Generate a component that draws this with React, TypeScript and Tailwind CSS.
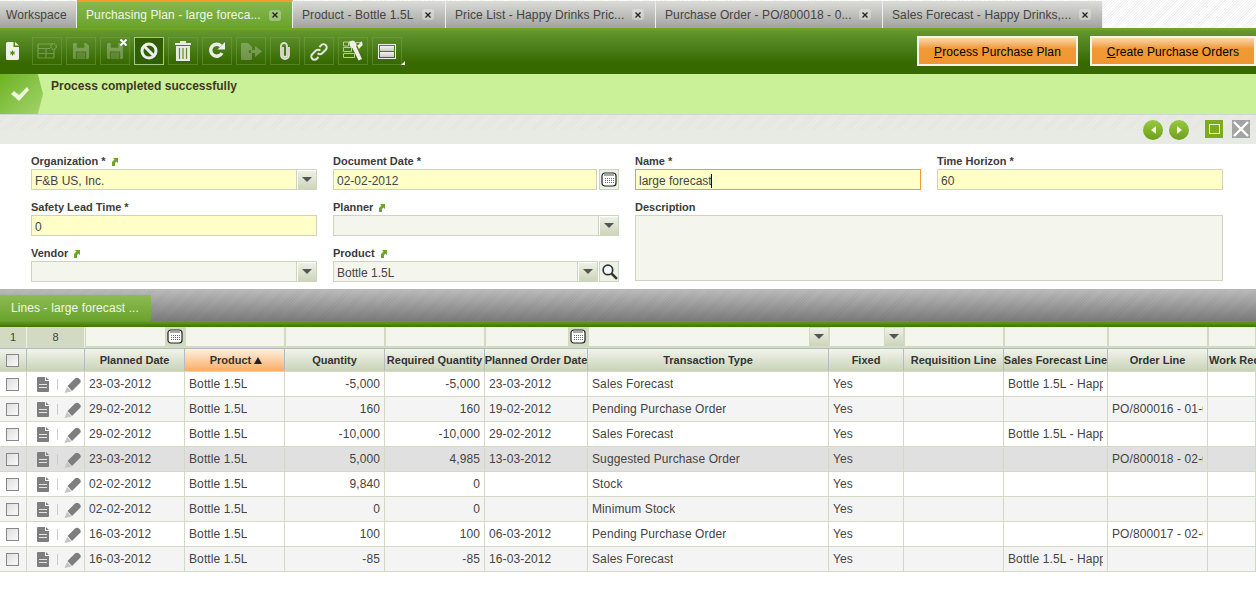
import React from "react";

const FONT = "font-['Liberation_Sans',Arial,sans-serif]";
const GRID = "grid grid-cols-[27px_58px_100px_100px_100px_100px_103px_241px_75px_100px_104px_100px_48px]";

const tabs = [
  { label: "Workspace", width: "w-[77px]" },
  { label: "Purchasing Plan - large foreca...", width: "w-[216px]", active: true, close: true },
  { label: "Product - Bottle 1.5L", width: "w-[153px]", close: true },
  { label: "Price List - Happy Drinks Pric...", width: "w-[210px]", close: true },
  { label: "Purchase Order - PO/800018 - 0...", width: "w-[227px]", close: true },
  { label: "Sales Forecast - Happy Drinks,...", width: "w-[220px]", close: true },
];

const HAPPY = "Bottle 1.5L - Happy Drinks";

const rows = [
  ["23-03-2012", "-5,000", "-5,000", "23-03-2012", "Sales Forecast", HAPPY, ""],
  ["29-02-2012", "160", "160", "19-02-2012", "Pending Purchase Order", "", "PO/800016 - 01-02-2012"],
  ["29-02-2012", "-10,000", "-10,000", "29-02-2012", "Sales Forecast", HAPPY, ""],
  ["23-03-2012", "5,000", "4,985", "13-03-2012", "Suggested Purchase Order", "", "PO/800018 - 02-02-2012"],
  ["02-02-2012", "9,840", "0", "", "Stock", "", ""],
  ["02-02-2012", "0", "0", "", "Minimum Stock", "", ""],
  ["16-03-2012", "100", "100", "06-03-2012", "Pending Purchase Order", "", "PO/800017 - 02-02-2012"],
  ["16-03-2012", "-85", "-85", "16-03-2012", "Sales Forecast", HAPPY, ""],
];

const Arrow = () => (
  <svg width="7" height="8" viewBox="0 0 7 8" className="ml-[5px] inline-block">
    <path d="M2 0h5v5L5.500 3.500 4 5v3H1V4l2.500-2.500z" fill="#6aa52a" />
  </svg>
);

const Caret = () => (
  <span className="flex h-[18px] w-[18px] items-center justify-center bg-gradient-to-b from-[#eef0e6] to-[#ccd5ba]">
    <svg width="10" height="5" viewBox="0 0 10 5"><path d="M0 0h10L5 5z" fill="#555" /></svg>
  </span>
);

const CalendarIcon = () => (
  <svg width="16" height="15" viewBox="0 0 16 15">
    <rect x="1" y="1" width="14" height="13" rx="3" fill="#fff" stroke="#222" strokeWidth="1.200" />
    <path d="M3 3h10" stroke="#555" strokeWidth="1" />
    <path d="M4 6.500h.8M6 6.500h.8M8 6.500h.8M10 6.500h.8M12 6.500h.8M4 8.500h.8M6 8.500h.8M8 8.500h.8M10 8.500h.8M12 8.500h.8M4 10.500h.8M6 10.500h.8M8 10.500h.8M10 10.500h.8M12 10.500h.8" stroke="#444" strokeWidth="1" />
  </svg>
);

const CloseTab = () => (
  <span className="flex h-[11px] w-[12px] items-center justify-center rounded-[3px] bg-white/30 text-black">
    <svg width="6" height="6" viewBox="0 0 6 6"><path d="M.5.5l5 5M5.500.5l-5 5" stroke="#222" strokeWidth="1.300" /></svg>
  </span>
);

const Floppy = ({ x }: { x?: boolean }) => (
  <span className="relative flex">
    <svg width="16" height="16" viewBox="0 0 17 17" className="opacity-30">
      <path d="M1.500 0H14l3 3v12.500Q17 17 15.500 17h-14Q0 17 0 15.500v-14Q0 0 1.500 0zM4 0v5h8V0zM3 9v8h11V9z" fill="#e9e9e4" fillRule="evenodd" />
      <path d="M4 10h9v7H4z" fill="#e9e9e4" opacity=".6" />
    </svg>
    {x && (
      <svg width="7" height="7" viewBox="0 0 7 7" className="absolute -right-[4px] -top-[4px]">
        <path d="M.5.5l6 6M6.500.5l-6 6" stroke="#fff" strokeWidth="2" />
      </svg>
    )}
  </span>
);

const ToolButton = ({ children, active }: { children: React.ReactNode; active?: boolean }) => (
  <div className={`flex h-[28px] w-[30px] items-center justify-center border ${active ? "border-[#a9c68a] bg-[#2f5f00]" : "border-[#7aa552]/45"}`}>
    {children}
  </div>
);

const Toolbar = () => (
  <div className="flex h-[46px] items-center justify-between border-t-2 border-[#71a51f] bg-gradient-to-b from-[#65982f] to-[#376900] to-75% pb-[2px]">
    <div className="flex items-center">
      <div className="ml-[6px] mr-[13px] flex w-[13px] justify-center">
        <svg width="13" height="18" viewBox="0 0 13 18">
          <path d="M0 1.500Q0 0 1.500 0H7.500v5H13v11.500Q13 18 11.500 18h-10Q0 18 0 16.500z" fill="#f1f1ec" />
          <path d="M9 0l4 3.500H9z" fill="#f1f1ec" />
          <path d="M6.500 8.500v5M4.300 9.800l4.400 2.400M8.700 9.800l-4.400 2.400" stroke="#4d8a12" strokeWidth="1.100" />
        </svg>
      </div>
      <div className="flex gap-[4px]">
        <ToolButton>
          <svg width="20" height="16" viewBox="0 0 20 16" className="opacity-30">
            <path d="M1 1h14M1 1v13a1 1 0 0 0 1 1h14a1 1 0 0 0 1-1V7M1 5.500h12M1 10.500h16M9 5.500v9.500" fill="none" stroke="#e9e9e4" strokeWidth="1.200" />
            <circle cx="16.500" cy="3.500" r="2.800" fill="none" stroke="#e9e9e4" strokeWidth="1.400" strokeDasharray="1.500 .7" />
          </svg>
        </ToolButton>
        <ToolButton><Floppy /></ToolButton>
        <ToolButton><Floppy x /></ToolButton>
        <ToolButton active>
          <svg width="20" height="20" viewBox="0 0 20 20">
            <circle cx="10" cy="10" r="7" fill="none" stroke="#eee" strokeWidth="3" />
            <path d="M5 5l10 10" stroke="#eee" strokeWidth="3" />
          </svg>
        </ToolButton>
        <ToolButton>
          <svg width="18" height="20" viewBox="0 0 18 20">
            <path d="M6 0h6v2h5v2H1V2h5zM2 5h14v15H2z" fill="#e9e9e4" />
            <path d="M5.500 7v11M9 7v11M12.500 7v11" stroke="#5d8c2d" strokeWidth="1.200" />
          </svg>
        </ToolButton>
        <ToolButton>
          <svg width="20" height="20" viewBox="0 0 20 20">
            <path d="M15 12a6 6 0 1 1-1-7" fill="none" stroke="#ececec" strokeWidth="3.400" />
            <path d="M10.500 8.500H18V1z" fill="#ececec" />
          </svg>
        </ToolButton>
        <ToolButton>
          <svg width="21" height="17" viewBox="0 0 21 17" className="opacity-30">
            <path d="M1 0h6l4 4v3H8v3h3v6a1 1 0 0 1-1 1H1a1 1 0 0 1-1-1V1a1 1 0 0 1 1-1zM10 7h4V3l7 5.500-7 5.500v-4h-4z" fill="#e9e9e4" />
          </svg>
        </ToolButton>
        <ToolButton>
          <svg width="12" height="18" viewBox="0 0 12 18">
            <path d="M4 5v8a2 2 0 0 0 4 0V4a3 3 0 0 0-6 0v9a4 4 0 0 0 8 0V5" fill="none" stroke="#dfdfd8" strokeWidth="1.800" />
          </svg>
        </ToolButton>
        <ToolButton>
          <svg width="20" height="19" viewBox="0 0 22 21">
            <path d="M9.500 12.500a3.500 3.500 0 0 0 5 0l4-4a3.500 3.500 0 0 0-5-5l-2 2" fill="none" stroke="#e6e6e0" strokeWidth="2.200" />
            <path d="M12.500 9.500a3.500 3.500 0 0 0-5 0l-4 4a3.500 3.500 0 0 0 5 5l2-2" fill="none" stroke="#e6e6e0" strokeWidth="2.200" />
          </svg>
        </ToolButton>
        <ToolButton>
          <svg width="22" height="22" viewBox="0 0 22 22">
            <path d="M1.500 7.500h8v4h-8zM1.500 13.500h11v4h-11zM1.500 2h5v4h-5zM14 2.500h6v3h-6z" fill="none" stroke="#b9cc9c" strokeWidth="1" />
            <path d="M7 1.500L11 .5q3.500 1 3 5.500l6 13-3.500 1.500-6-12.500Q7.500 8 7 1.500z" fill="#efefe8" />
            <path d="M19.500 1l-4 5 1.500 3 3.500-4z" fill="#efefe8" />
          </svg>
        </ToolButton>
        <ToolButton>
          <span className="relative flex">
            <span className="flex h-[15px] w-[18px] flex-col gap-[1px] border border-[#eee] p-[1px]">
              <span className="h-[5px] bg-gradient-to-b from-[#f4f4f0] to-[#c8c8c0]" />
              <span className="h-[5px] bg-gradient-to-b from-[#f4f4f0] to-[#c8c8c0]" />
            </span>
            <span className="absolute -bottom-[6px] -right-[9px] h-0 w-0 border-b-[4px] border-l-[4px] border-b-white border-l-transparent" />
          </span>
        </ToolButton>
      </div>
    </div>
    <div className="flex gap-[12px] text-[12px] tracking-[0.1px] text-black">
      <ActionButton first="P" rest="rocess Purchase Plan" width="w-[161px]" />
      <ActionButton first="C" rest="reate Purchase Orders" width="w-[166px]" />
    </div>
  </div>
);

const ActionButton = ({ first, rest, width }: { first: string; rest: string; width: string }) => (
  <button className={`h-[30px] ${width} border-2 border-[#f4f4ee] bg-gradient-to-b from-[#fbd9a8] via-[#f09a35] via-40% to-[#ef9632] pt-px text-center`}>
    <span className="underline">{first}</span>
    {rest}
  </button>
);

const Label = ({ text, arrow }: { text: string; arrow?: boolean }) => (
  <div className="h-[14px] text-[11px] font-bold leading-[13px] text-[#3b3b3b]">
    {text}
    {arrow && <Arrow />}
  </div>
);

const Field = ({
  label,
  value,
  arrow,
  required,
  caret,
  calendar,
  search,
  focus,
}: {
  label: string;
  value?: string;
  arrow?: boolean;
  required?: boolean;
  caret?: boolean;
  calendar?: boolean;
  search?: boolean;
  focus?: boolean;
}) => (
  <div className="flex flex-col">
    <Label text={label} arrow={arrow} />
    <div className="flex h-[21px] items-stretch">
      <div
        className={`flex min-w-0 flex-1 items-center border px-[3px] pt-[2px] text-[12px] text-[#444] ${
          focus ? "border-[#f39a34]" : "border-[#cdd6bc]"
        } ${required ? "bg-[#ffffc8]" : "bg-[#f4f6ee]"}`}
      >
        {value}
        {focus && <span className="ml-[-1px] h-[14px] w-px bg-[#111]" />}
      </div>
      {caret && (
        <div className="flex w-[20px] items-center justify-center border border-l-0 border-[#cdd6bc]">
          <Caret />
        </div>
      )}
      {calendar && (
        <div className="ml-[2px] flex w-[20px] items-center justify-center border border-[#cdd6bc] bg-[#eef1e6]">
          <CalendarIcon />
        </div>
      )}
      {search && (
        <div className="ml-[1px] flex w-[20px] items-center justify-center border border-[#cdd6bc] bg-[#eef1e6]">
          <svg width="17" height="17" viewBox="0 0 16 16">
            <circle cx="6.500" cy="6.500" r="4.500" fill="#f4f8ff" stroke="#333" strokeWidth="1.600" />
            <path d="M10 10l5 5" stroke="#333" strokeWidth="2.400" />
          </svg>
        </div>
      )}
    </div>
  </div>
);

const Form = () => (
  <div className="grid h-[145px] grid-cols-[286px_286px_286px_286px] grid-rows-[46px_46px_46px] gap-x-[16px] bg-white pl-[31px] pt-[11px]">
    <Field label="Organization *" arrow value="F&B US, Inc." required caret />
    <Field label="Document Date *" value="02-02-2012" required calendar />
    <Field label="Name *" value="large forecast" required focus />
    <Field label="Time Horizon *" value="60" required />
    <Field label="Safety Lead Time *" value="0" required />
    <Field label="Planner" arrow caret />
    <div className="col-span-2 row-span-2 flex flex-col">
      <Label text="Description" />
      <div className="h-[66px] w-[588px] border border-[#cdd6bc] bg-[#f4f6ee]" />
    </div>
    <Field label="Vendor" arrow caret />
    <Field label="Product" arrow value="Bottle 1.5L" caret search />
  </div>
);

const Check = () => (
  <span className="block h-[13px] w-[13px] border border-[#888] bg-gradient-to-br from-[#dedede] to-[#fbfbfb]" />
);

const Head = ({ children, sorted, check }: { children?: React.ReactNode; sorted?: boolean; check?: boolean }) => (
  <div
    className={`flex items-center justify-center overflow-hidden whitespace-nowrap border-r border-[#b4bcc0] text-[11px] font-bold text-[#333] ${
      sorted ? "bg-gradient-to-b from-[#fdf0df] to-[#f9ad66] pl-[3px]" : ""
    } ${check ? "pr-px" : ""}`}
  >
    {children}
  </div>
);

const Cell = ({ children, right }: { children?: React.ReactNode; right?: boolean }) => (
  <div
    className={`flex min-w-0 items-center border-r border-[#d3dac3] pl-[4px] pr-[4px] text-[12px] tracking-[0.1px] text-[#444] ${
      right ? "justify-end" : ""
    }`}
  >
    <span className="block overflow-hidden whitespace-nowrap">{children}</span>
  </div>
);

const Filter = ({ icon }: { icon?: React.ReactNode }) => (
  <div className="flex items-stretch border-x border-b-2 border-[#d3dac3]">
    <div className="flex-1 bg-[#f4f6ee]" />
    {icon && <div className="flex w-[19px] items-center justify-center">{icon}</div>}
  </div>
);

const RowIcons = () => (
  <div className="flex items-center gap-[7px] border-r border-[#d3dac3] pl-[9px]">
    <svg width="14" height="15" viewBox="0 0 14 15">
      <path d="M2 0h7v4h4v10a1 1 0 0 1-1 1H2a1 1 0 0 1-1-1V1a1 1 0 0 1 1-1zM10 0l3 3h-3z" fill="#7e7e7e" />
      <path d="M3 7.500h8M3 10.500h8" stroke="#e4e4e4" strokeWidth="1" />
    </svg>
    <span className="h-[11px] w-px bg-[#ccc]" />
    <svg width="17" height="17" viewBox="0 0 17 17" className="-ml-px">
      <path d="M3.500 10L11 2.500q2-1.500 4 0l1 1q1.500 2 0 3.500l-8 8z" fill="#7e7e7e" />
      <path d="M3 11l4.500 4.500L.5 17z" fill="#c4c4c4" />
    </svg>
  </div>
);

const Lines = () => (
  <div className="h-[250px] overflow-hidden">
    <div className={`${GRID} h-[22px] border-b border-[#b4bcc0] bg-[#d3dac3]`}>
      <div className="flex items-center justify-center border-r border-[#eef0e6] text-[11px] text-[#444]">1</div>
      <div className="flex items-center justify-center border-r border-[#eef0e6] text-[11px] text-[#444]">8</div>
      <Filter icon={<CalendarIcon />} />
      <Filter />
      <Filter />
      <Filter />
      <Filter icon={<CalendarIcon />} />
      <Filter icon={<Caret />} />
      <Filter icon={<Caret />} />
      <Filter />
      <Filter />
      <Filter />
      <Filter />
    </div>
    <div className={`${GRID} h-[23px] border-b border-[#d3dac3] bg-gradient-to-b from-[#f2f4ec] to-[#c9d3b8]`}>
      <Head check><Check /></Head>
      <Head />
      <Head>Planned Date</Head>
      <Head sorted>
        Product
        <svg width="8" height="7" viewBox="0 0 8 7" className="ml-[3px]"><path d="M4 0l4 7H0z" fill="#222" /></svg>
      </Head>
      <Head>Quantity</Head>
      <Head>Required Quantity</Head>
      <Head>Planned Order Date</Head>
      <Head>Transaction Type</Head>
      <Head>Fixed</Head>
      <Head>Requisition Line</Head>
      <Head>Sales Forecast Line</Head>
      <Head>Order Line</Head>
      <div className="flex items-center overflow-hidden whitespace-nowrap pl-[1px] text-[11px] font-bold text-[#333]">Work Requ</div>
    </div>
    {rows.map((r, i) => (
      <div
        key={i}
        className={`${GRID} h-[25px] border-b border-[#d3dac3] ${
          i === 3 ? "bg-[#e0e0e0]" : i % 2 === 1 ? "bg-[#f4f4f4]" : "bg-white"
        }`}
      >
        <div className="flex items-center justify-center border-r border-[#d3dac3] pr-px"><Check /></div>
        <RowIcons />
        <Cell>{r[0]}</Cell>
        <Cell>Bottle 1.5L</Cell>
        <Cell right>{r[1]}</Cell>
        <Cell right>{r[2]}</Cell>
        <Cell>{r[3]}</Cell>
        <Cell>{r[4]}</Cell>
        <Cell>Yes</Cell>
        <Cell />
        <Cell>{r[5]}</Cell>
        <Cell>{r[6]}</Cell>
        <Cell />
      </div>
    ))}
  </div>
);

const HATCH = "bg-[repeating-linear-gradient(135deg,#e5e6e0_0,#e5e6e0_1px,#ebece6_1px,#ebece6_2px)]";

export default function App() {
  return (
    <div className={`${FONT} h-[592px] w-[1256px] overflow-hidden bg-white`}>
      <div className="flex h-[28px] bg-[repeating-linear-gradient(135deg,#f2f2f2_0,#f2f2f2_1px,#fff_1px,#fff_2px)]">
        {tabs.map((t, i) => (
          <div
            key={t.label}
            className={`${t.width} flex shrink-0 items-center justify-between whitespace-nowrap border-r border-[#eee] pr-[11px] text-[12px] tracking-[0.1px] ${
              i === 0 ? "pl-[6px]" : "pl-[9px]"
            } ${
              t.active
                ? "border-t-2 border-t-[#f39a34] bg-gradient-to-b from-[#86b84e] to-[#6aa32b] text-[#f2f6ea]"
                : "mt-px bg-gradient-to-b from-[#dcdcd8] to-[#a2a29e] text-[#444]"
            }`}
          >
            <span>{t.label}</span>
            {t.close && <CloseTab />}
          </div>
        ))}
      </div>
      <Toolbar />
      <div className="flex h-[40px] bg-[#caf198]">
        <div className="flex w-[43px] items-center justify-center bg-gradient-to-br from-[#6db31c] to-[#a2d469] [clip-path:polygon(0_0,88%_0,100%_50%,88%_100%,0_100%)]">
          <svg width="20" height="16" viewBox="0 0 20 16" className="mr-[3px]"><path d="M1 8l3-3 5 4 8-8 2 3L9 15z" fill="#eef6de" /></svg>
        </div>
        <div className="pl-[8px] pt-[5px] text-[12px] font-bold leading-[14px] tracking-[0.02px] text-[#3f3a1e]">Process completed successfully</div>
      </div>
      <div className="relative flex h-[30px] items-start justify-end gap-[9px] bg-[#e8eae4] pr-[6px] pt-[6px]">
        <div className={`absolute inset-x-0 top-0 h-[16px] border-t border-[#d4d5d0] ${HATCH}`} />
        <div className="relative flex items-center gap-[6px] pr-[7px]">
          {["M6 1L1 5l5 4z", "M1 1l5 4-5 4z"].map((d) => (
            <span key={d} className="flex h-[20px] w-[20px] items-center justify-center rounded-full bg-gradient-to-b from-[#98c93f] to-[#6d9f1c]">
              <svg width="7" height="10" viewBox="0 0 7 10"><path d={d} fill="#eef5dc" /></svg>
            </span>
          ))}
        </div>
        <span className="relative flex h-[18px] w-[18px] items-center justify-center bg-[#7bab1f]">
          <span className="h-[10px] w-[11px] border border-[#eef5dc]" />
        </span>
        <span className="relative flex h-[18px] w-[18px] items-center justify-center bg-[#a3a3a3]">
          <svg width="16" height="16" viewBox="0 0 16 16"><path d="M1 1l14 14M15 1L1 15" stroke="#fff" strokeWidth="2.400" /></svg>
        </span>
      </div>
      <Form />
      <div className="flex h-[32px] items-end border-t border-[#b4b4b4] bg-[repeating-linear-gradient(135deg,#0000000a_0,#0000000a_1px,transparent_1px,transparent_2px),linear-gradient(#bdbdbd,#7c7c7c)]">
        <div className="flex h-[26px] w-[151px] items-center bg-gradient-to-b from-[#8dbb52] to-[#6aa32b] pl-[11px] text-[12px] tracking-[0.1px] text-[#f2f6ea]">
          Lines - large forecast ...
        </div>
      </div>
      <div className="h-[6px] bg-gradient-to-b from-[#69a023] to-[#3f7500]" />
      <Lines />
    </div>
  );
}
